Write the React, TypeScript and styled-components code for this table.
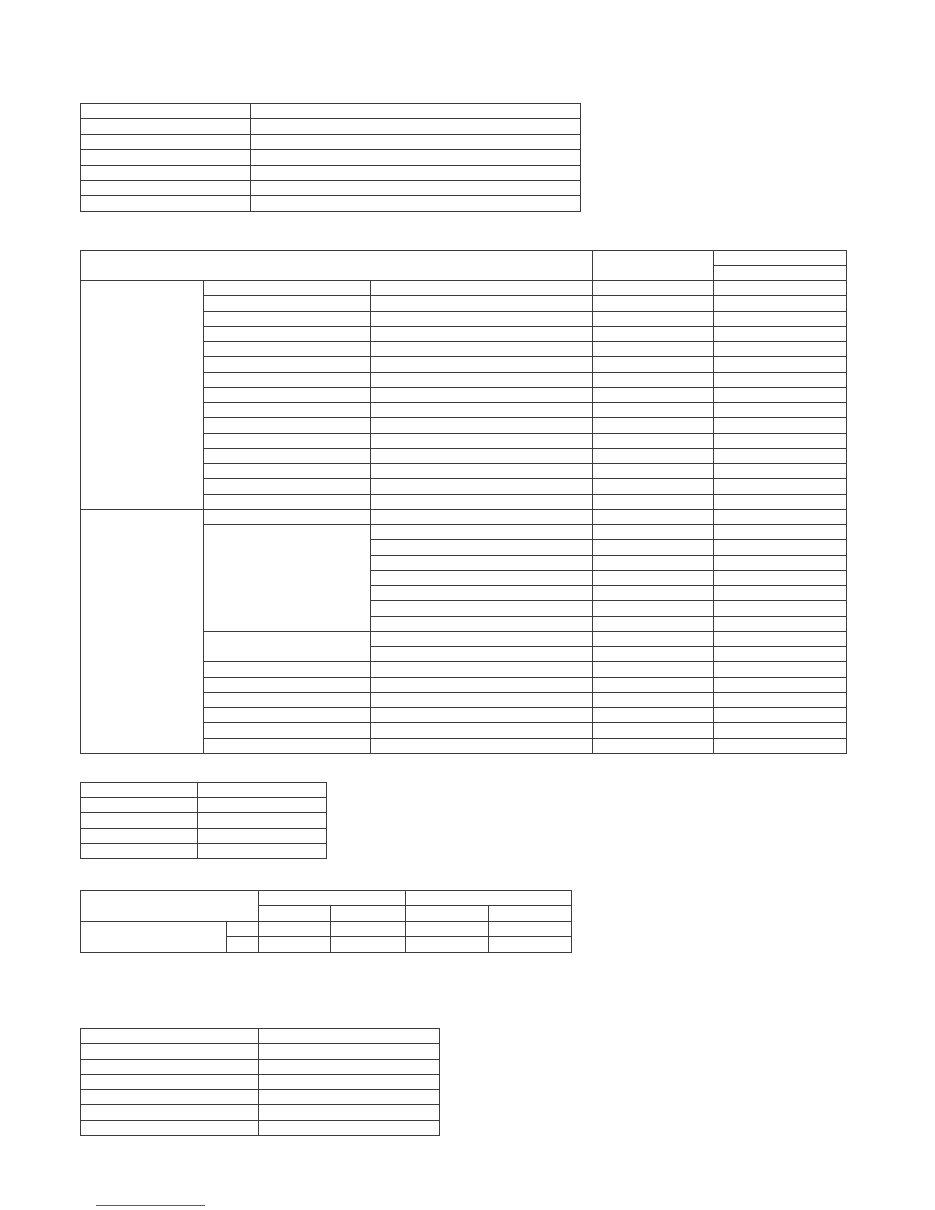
import React from 'react';
import styled, { createGlobalStyle } from 'styled-components';

const GlobalStyle = createGlobalStyle`
  html, body {
    margin: 0;
    padding: 0;
    background: #ffffff;
    font-family: 'Liberation Sans', Arial, sans-serif;
  }
`;

const Page = styled.div`
  width: 935px;
  min-height: 1210px;
  padding: 0 0 0 80px;
  box-sizing: border-box;
  display: flex;
  flex-direction: column;
  align-items: flex-start;
`;

const Grid = styled.table<{ $top: number; $width: number; $row: number }>`
  margin-top: ${p => p.$top}px;
  width: ${p => p.$width}px;
  border-collapse: collapse;
  table-layout: fixed;
  border: 1px solid #3c3c3c;
  font-size: 0;
  line-height: 0;

  tr {
    height: ${p => p.$row}px;
  }
`;

const Row = styled.tr``;

const Cell = styled.td`
  border: 1px solid #3c3c3c;
  padding: 0;
`;

const FootRule = styled.div`
  margin: 69px 0 0 16px;
  width: 109px;
  height: 1px;
  background: #4a4ae8;
`;

const range = (n: number) => Array.from({ length: n }, (_, i) => i);

const TwoCol: React.FC<{ top: number; widths: [number, number]; rows: number; row: number }> = ({
  top,
  widths,
  rows,
  row
}) => (
  <Grid $top={top} $width={widths[0] + widths[1]} $row={row}>
    <colgroup>
      <col style={{ width: widths[0] }} />
      <col style={{ width: widths[1] }} />
    </colgroup>
    <tbody>
      {range(rows).map(i => (
        <Row key={i}>
          <Cell />
          <Cell />
        </Row>
      ))}
    </tbody>
  </Grid>
);

const MainTable: React.FC = () => (
  <Grid $top={38} $width={766} $row={15.26}>
    <colgroup>
      <col style={{ width: 123 }} />
      <col style={{ width: 167 }} />
      <col style={{ width: 222 }} />
      <col style={{ width: 121 }} />
      <col style={{ width: 133 }} />
    </colgroup>
    <thead>
      <Row>
        <Cell colSpan={3} rowSpan={2} />
        <Cell rowSpan={2} />
        <Cell />
      </Row>
      <Row>
        <Cell />
      </Row>
    </thead>
    <tbody>
      {range(15).map(i => (
        <Row key={`a${i}`}>
          {i === 0 && <Cell rowSpan={15} />}
          <Cell />
          <Cell />
          <Cell />
          <Cell />
        </Row>
      ))}
      <Row>
        <Cell rowSpan={16} />
        <Cell />
        <Cell />
        <Cell />
        <Cell />
      </Row>
      {range(7).map(i => (
        <Row key={`b${i}`}>
          {i === 0 && <Cell rowSpan={7} />}
          <Cell />
          <Cell />
          <Cell />
        </Row>
      ))}
      {range(2).map(i => (
        <Row key={`c${i}`}>
          {i === 0 && <Cell rowSpan={2} />}
          <Cell />
          <Cell />
          <Cell />
        </Row>
      ))}
      {range(6).map(i => (
        <Row key={`d${i}`}>
          <Cell />
          <Cell />
          <Cell />
          <Cell />
        </Row>
      ))}
    </tbody>
  </Grid>
);

const SplitTable: React.FC = () => (
  <Grid $top={31} $width={491} $row={15.5}>
    <colgroup>
      <col style={{ width: 146 }} />
      <col style={{ width: 32 }} />
      <col style={{ width: 72 }} />
      <col style={{ width: 75 }} />
      <col style={{ width: 83 }} />
      <col style={{ width: 83 }} />
    </colgroup>
    <thead>
      <Row>
        <Cell colSpan={2} rowSpan={2} />
        <Cell colSpan={2} />
        <Cell colSpan={2} />
      </Row>
      <Row>
        <Cell />
        <Cell />
        <Cell />
        <Cell />
      </Row>
    </thead>
    <tbody>
      <Row>
        <Cell rowSpan={2} />
        <Cell />
        <Cell />
        <Cell />
        <Cell />
        <Cell />
      </Row>
      <Row>
        <Cell />
        <Cell />
        <Cell />
        <Cell />
        <Cell />
      </Row>
    </tbody>
  </Grid>
);

export default function App() {
  return (
    <>
      <GlobalStyle />
      <Page>
        <TwoCol top={103} widths={[170, 330]} rows={7} row={15.4} />
        <MainTable />
        <TwoCol top={28} widths={[117, 129]} rows={5} row={15.2} />
        <SplitTable />
        <TwoCol top={75} widths={[178, 181]} rows={7} row={15.3} />
        <FootRule />
      </Page>
    </>
  );
}
